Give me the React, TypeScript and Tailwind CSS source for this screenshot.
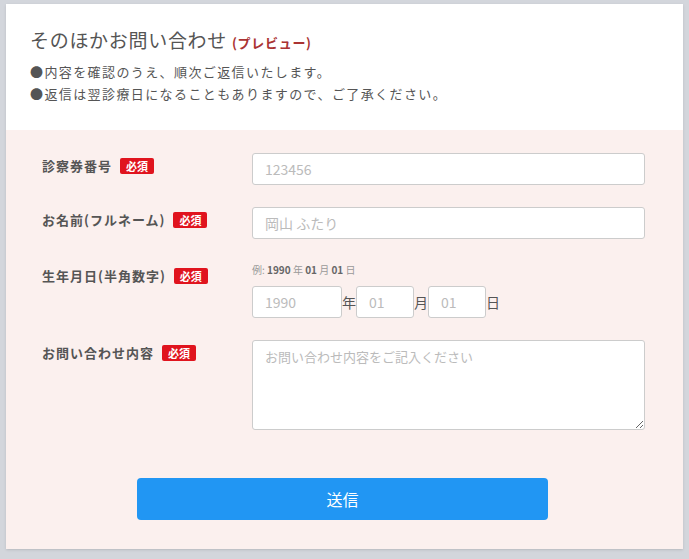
const font = { fontFamily: '"Noto Sans CJK JP", "Liberation Sans", sans-serif' }

function Req() {
  return <span className="ml-2 inline-block rounded-[2px] bg-[#e0141e] px-[6px] text-[11px] font-bold leading-[16px] tracking-normal text-white">必須</span>
}

const inputCls = 'h-[32px] rounded-[3px] border border-[#ccc] bg-white px-3 text-[14px] text-[#555] placeholder:text-[#bbb] outline-none'
const labelCls = 'w-[210px] pt-[3px] text-[13px] font-bold tracking-[1px] text-[#555]'

export default function App() {
  return (
    <div className="h-[559px] bg-[#d3d6dc] px-[6px] pt-[4px]" style={font}>
      <div className="h-[545px] bg-white shadow">
        <div className="px-[24px] pt-[22px] h-[126px]">
          <h1 className="text-[19px] tracking-[0.7px] text-[#555]">
            そのほかお問い合わせ <span className="text-[13px] font-bold text-[#a33]">(プレビュー)</span>
          </h1>
          <p className="mt-[6px] text-[13px] leading-[22px] tracking-[1.4px] text-[#555]">●内容を確認のうえ、順次ご返信いたします。<br />●返信は翌診療日になることもありますので、ご了承ください。</p>
        </div>
        <div className="h-[419px] bg-[#fbf0ee] pl-[36px] pr-[38px] pt-[23px]">
          <div className="flex items-start">
            <div className={labelCls}>診察券番号<Req /></div>
            <input className={`${inputCls} w-[393px]`} placeholder="123456" />
          </div>
          <div className="mt-[22px] flex items-start">
            <div className={labelCls}>お名前(フルネーム)<Req /></div>
            <input className={`${inputCls} w-[393px]`} placeholder="岡山 ふたり" />
          </div>
          <div className="mt-[24px] flex items-start">
            <div className={labelCls}>生年月日(半角数字)<Req /></div>
            <div>
              <div className="text-[10px] leading-[14px] text-[#999]">例: <b className="text-[#666]">1990</b> 年 <b className="text-[#666]">01</b> 月 <b className="text-[#666]">01</b> 日</div>
              <div className="mt-[9px] flex items-center text-[14px] text-[#555]">
                <input className={`${inputCls} w-[90px]`} placeholder="1990" />年
                <input className={`${inputCls} w-[58px]`} placeholder="01" />月
                <input className={`${inputCls} w-[58px]`} placeholder="01" />日
              </div>
            </div>
          </div>
          <div className="mt-[22px] flex items-start">
            <div className={labelCls}>お問い合わせ内容<Req /></div>
            <textarea className="h-[90px] w-[393px] rounded-[3px] border border-[#ccc] bg-white px-3 py-[6px] text-[13px] placeholder:text-[#bbb] outline-none" placeholder="お問い合わせ内容をご記入ください" />
          </div>
          <div className="mt-[48px] flex justify-center pr-[2px]">
            <button className="h-[42px] w-[411px] rounded-[4px] bg-[#2196f3] text-[16px] text-white">送信</button>
          </div>
        </div>
      </div>
    </div>
  )
}
